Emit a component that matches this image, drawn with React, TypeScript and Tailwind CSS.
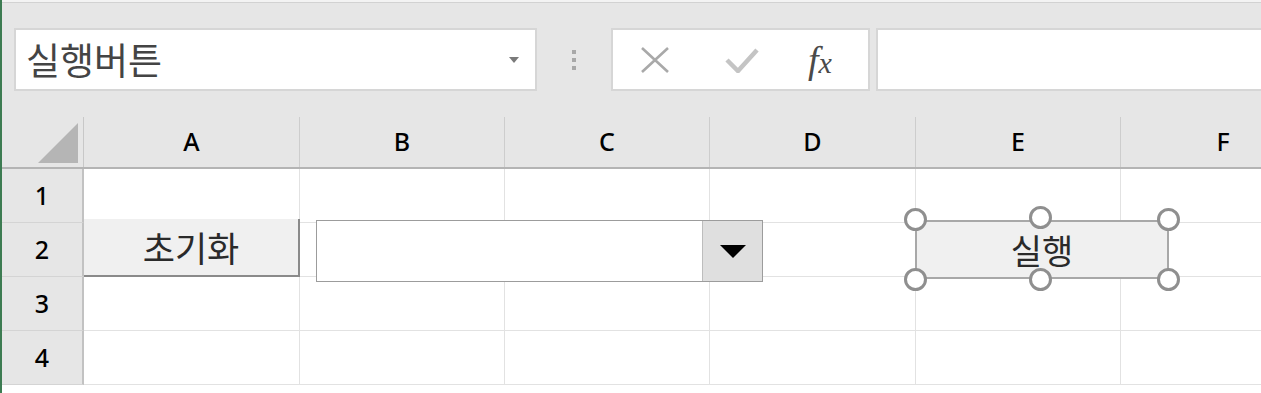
const ko = "font-['Noto_Sans_CJK_KR','Noto_Sans',sans-serif]"
const lat = "font-['Noto_Sans','Open_Sans',sans-serif]"

const cols = ["A", "B", "C", "D", "E", "F"]
const colW = ["w-[216px]", "w-[205px]", "w-[205px]", "w-[206px]", "w-[205px]", "w-[205px]"]
const rows = ["1", "2", "3", "4"]

function Handle({ className }: { className: string }) {
  return (
    <div
      className={`absolute h-[23px] w-[23px] rounded-full border-[3px] border-[#8f8f8f] bg-white ${className}`}
    />
  )
}

export default function App() {
  return (
    <div className="relative flex h-[393px] w-[1261px] overflow-hidden bg-white">
      <div className="w-[2px] shrink-0 bg-[#3d7c52]" />

      <div className="flex min-w-0 flex-1 flex-col">
        {/* formula bar */}
        <div className="h-[3px] border-b border-[#d2d2d2] bg-[#f3f3f3]" />
        <div className="flex h-[114px] items-start bg-[#e6e6e6] pt-[25px]">
          <div className="ml-[12px] flex h-[63px] w-[523px] items-center border-2 border-[#d6d6d6] bg-white pl-[10px] pr-[16px]">
            <span className={`${ko} flex-1 text-[37px] leading-none text-[#444444]`}>실행버튼</span>
            <div className="h-0 w-0 border-x-[5px] border-t-[6px] border-x-transparent border-t-[#7a7a7a]" />
          </div>
          <div className="flex h-[63px] w-[74px] flex-col items-center justify-center gap-[4px]">
            <div className="h-[4px] w-[4px] bg-[#a8a8a8]" />
            <div className="h-[4px] w-[4px] bg-[#a8a8a8]" />
            <div className="h-[4px] w-[4px] bg-[#a8a8a8]" />
          </div>
          <div className="flex h-[63px] w-[259px] items-center border-2 border-[#d6d6d6] bg-white">
            <svg className="ml-[27px] h-[26px] w-[30px]" viewBox="0 0 30 26">
              <path d="M2 1 L28 25 M28 1 L2 25" stroke="#a9a9a9" strokeWidth="2.6" fill="none" />
            </svg>
            <svg className="ml-[55px] h-[26px] w-[34px]" viewBox="0 0 34 26">
              <path d="M2 13 L13 24 L32 3" stroke="#c4c4c4" strokeWidth="4.5" fill="none" />
            </svg>
            <span className="ml-[49px] font-['Liberation_Serif',serif] text-[38px] italic leading-none text-[#4a4a4a]">
              f<span className="text-[30px]">x</span>
            </span>
          </div>
          <div className="ml-[6px] h-[63px] flex-1 border-2 border-r-0 border-[#d6d6d6] bg-white" />
        </div>

        {/* column headers */}
        <div className="flex h-[52px] border-b-2 border-[#b4b4b4] bg-[#e6e6e6]">
          <div className="relative w-[82px] shrink-0 border-r border-[#c8c8c8]">
            <svg className="absolute left-[36px] top-[6px] h-[40px] w-[40px]" viewBox="0 0 40 40">
              <path d="M40 0 L40 40 L0 40 Z" fill="#b5b5b5" />
            </svg>
          </div>
          {cols.map((c, i) => (
            <div
              key={c}
              className={`${colW[i]} flex shrink-0 items-center justify-center border-r border-[#cdcdcd] ${lat} text-[25px] font-medium text-black`}
            >
              {c}
            </div>
          ))}
        </div>

        {/* rows */}
        {rows.map((r) => (
          <div key={r} className="flex h-[54px]">
            <div
              className={`flex w-[82px] shrink-0 items-center justify-center border-b border-r-2 border-b-[#d4d4d4] border-r-[#c2c2c2] bg-[#e6e6e6] ${lat} text-[25px] font-medium text-black`}
            >
              {r}
            </div>
            {cols.map((c, i) => (
              <div key={c} className={`${colW[i]} shrink-0 border-b border-r border-[#e2e2e2]`} />
            ))}
          </div>
        ))}
      </div>

      {/* form controls on the sheet */}
      <div
        className={`absolute left-[84px] top-[219px] flex h-[58px] w-[216px] items-center justify-center border-b-2 border-r-2 border-[#8a8a8a] bg-[#f0f0f0] ${ko} text-[35px] text-[#2a2a2a]`}
      >
        초기화
      </div>

      <div className="absolute left-[316px] top-[220px] flex h-[62px] w-[447px] border border-[#9c9c9c] bg-white">
        <div className="flex-1" />
        <div className="flex w-[60px] items-center justify-center border-l border-[#bdbdbd] bg-[#dfdfdf]">
          <div className="h-0 w-0 border-x-[13px] border-t-[13px] border-x-transparent border-t-black" />
        </div>
      </div>

      <div
        className={`absolute left-[915px] top-[220px] flex h-[59px] w-[254px] items-center justify-center border-2 border-[#a8a8a8] bg-[#f0f0f0] ${ko} text-[34px] text-[#2a2a2a]`}
      >
        실행
      </div>
      <Handle className="left-[904px] top-[208px]" />
      <Handle className="left-[1029px] top-[206px]" />
      <Handle className="left-[1157px] top-[208px]" />
      <Handle className="left-[904px] top-[268px]" />
      <Handle className="left-[1029px] top-[268px]" />
      <Handle className="left-[1157px] top-[268px]" />
    </div>
  )
}
